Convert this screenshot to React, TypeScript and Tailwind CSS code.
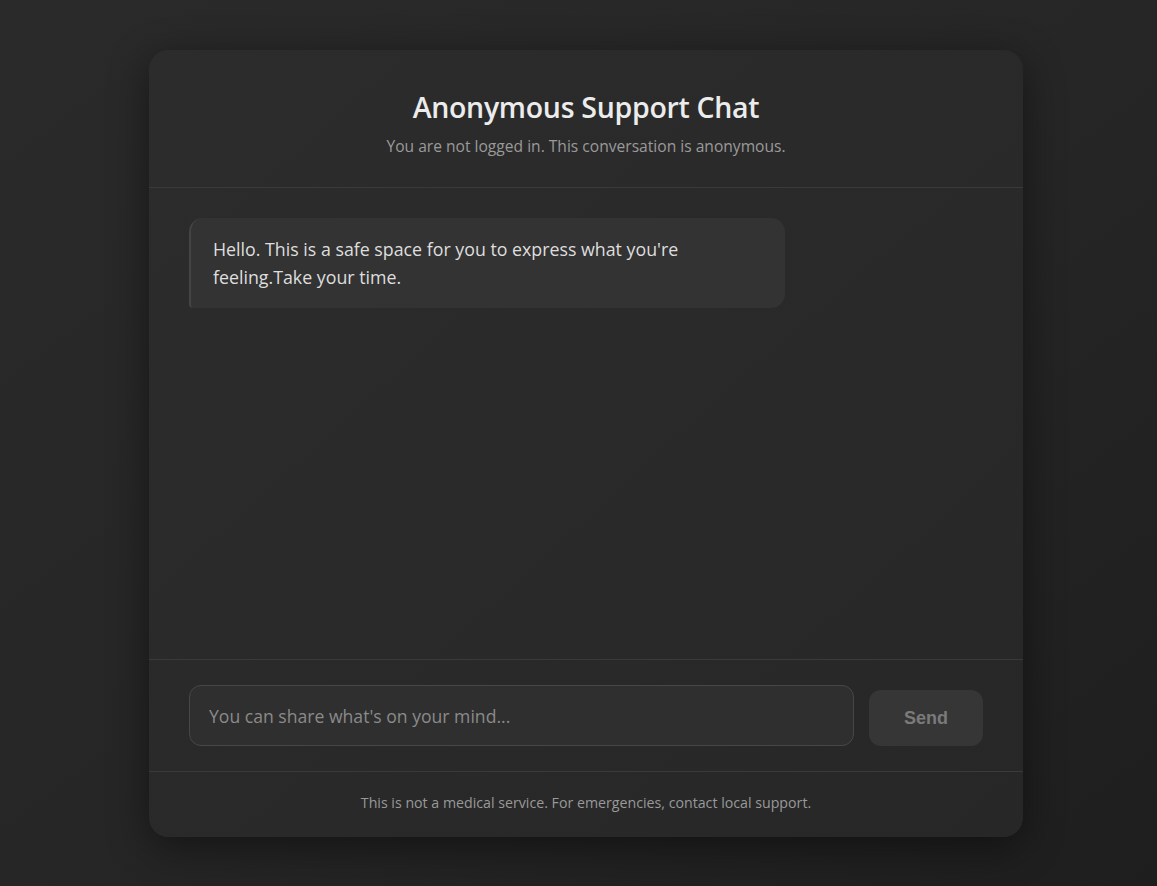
export default function App() {
    return (
        <div
            className="min-h-screen w-full bg-gradient-to-br from-[#2a2a2a] via-[#262626] to-[#1e1e1e] flex justify-center pl-[15px] pt-[50px] pb-[49px]"
            style={{ fontFamily: '"Open Sans", "Noto Sans", sans-serif' }}
        >
            <div className="w-[874px] h-[787px] flex flex-col rounded-[20px] bg-gradient-to-br from-[#2c2c2c] to-[#272727] shadow-[0_10px_40px_rgba(0,0,0,0.45)] overflow-hidden">
                {/* header */}
                <div className="h-[138px] shrink-0 flex flex-col items-center pt-[38px] border-b border-[#3a3a3a]">
                    <h1 className="text-[28.5px] leading-[38px] font-semibold text-[#ececec] tracking-[-0.3px]">
                        Anonymous Support Chat
                    </h1>
                    <p className="mt-[10px] text-[15.6px] leading-[20px] text-[#9a9a9a]">
                        You are not logged in. This conversation is anonymous.
                    </p>
                </div>

                {/* messages */}
                <div className="flex-1 px-10 pt-[30px]">
                    <div className="w-[596px] rounded-[14px] rounded-bl-[4px] border-l-2 border-[#444] bg-[#333333] px-[22px] py-[17px] text-[17.8px] leading-[28px] text-[#dedede]">
                        Hello. This is a safe space for you to express what you're feeling.Take your time.
                    </div>
                </div>

                {/* input */}
                <div className="h-[113px] shrink-0 border-t border-[#3a3a3a] border-b flex items-end gap-[15px] px-10 pb-[25px]">
                    <input
                        type="text"
                        placeholder="You can share what's on your mind..."
                        className="flex-1 h-[61px] rounded-[12px] border border-[#474747] bg-[#2f2f2f] px-[19px] text-[17.6px] text-[#ddd] placeholder-[#8a8a8a] outline-none"
                    />
                    <button
                        className="w-[114px] h-[56px] rounded-[12px] bg-[#363636] text-[18px] font-semibold text-[#7a7a7a]"
                        style={{ fontFamily: '"Liberation Sans", Arial, sans-serif' }}
                    >
                        Send
                    </button>
                </div>

                {/* footer */}
                <div className="h-[65px] shrink-0 flex items-center justify-center pb-[3px]">
                    <p className="text-[14.2px] text-[#999]">
                        This is not a medical service. For emergencies, contact local support.
                    </p>
                </div>
            </div>
        </div>
    );
}
